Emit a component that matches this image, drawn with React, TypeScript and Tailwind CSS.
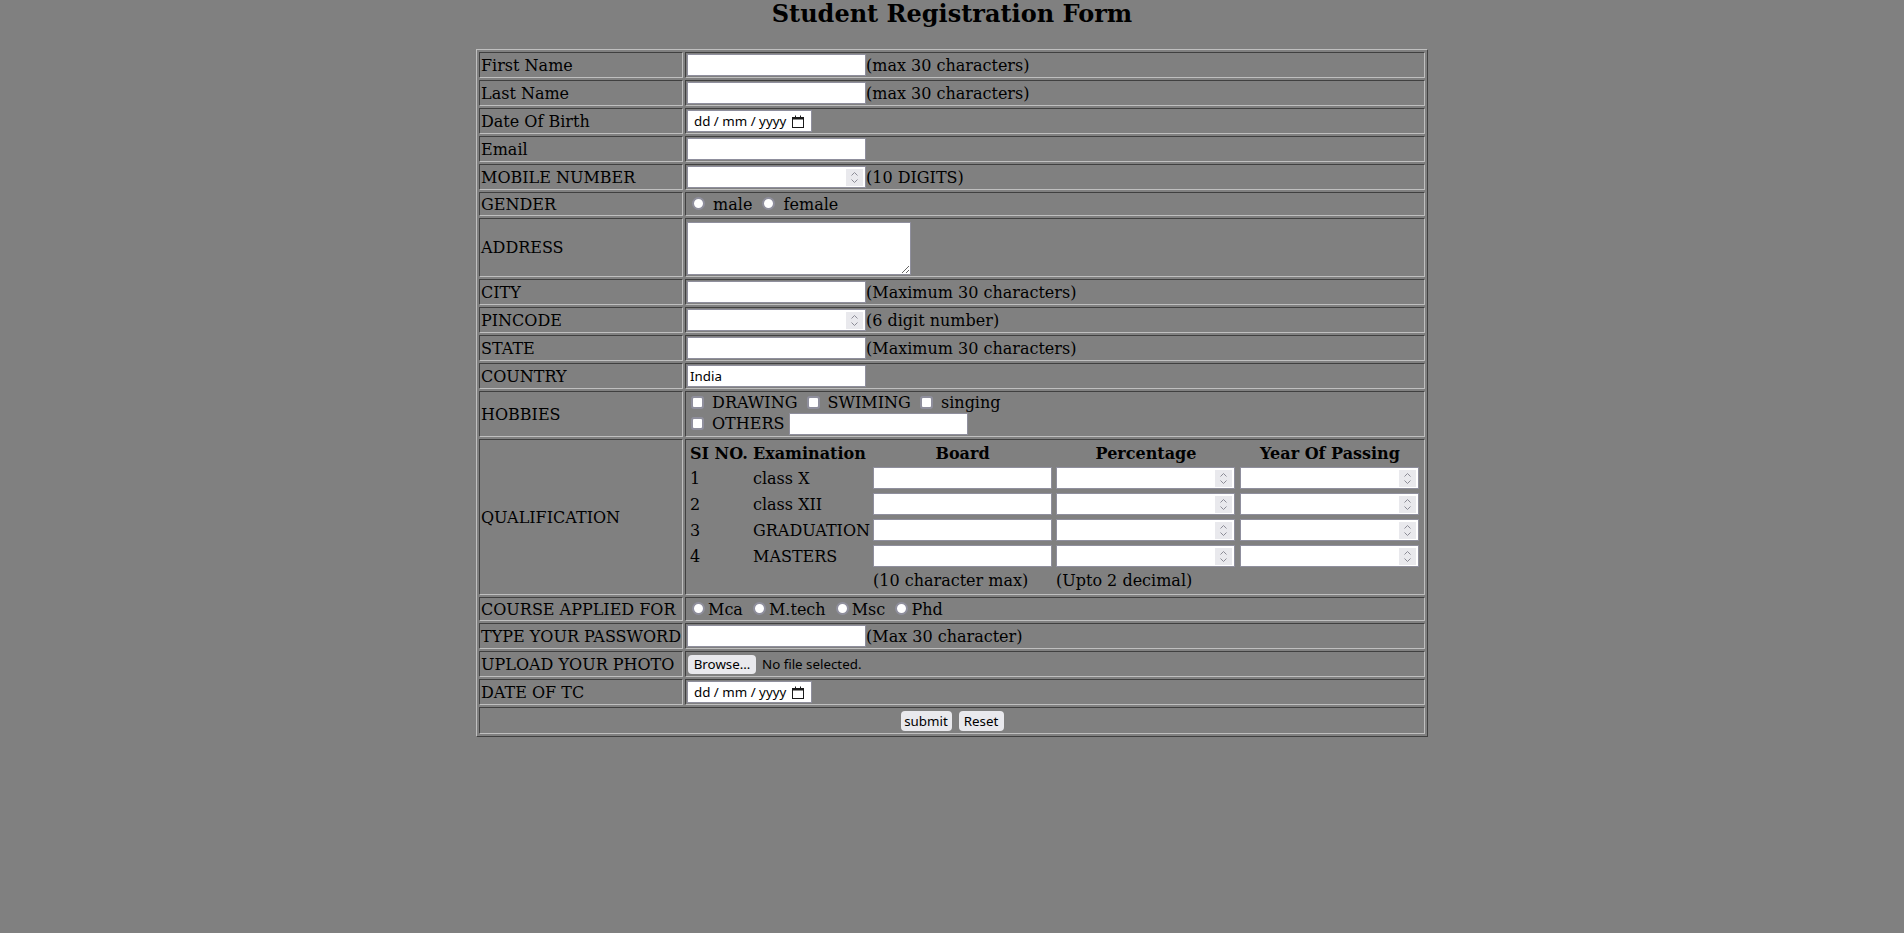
import React from "react";

const cell =
  "border border-t-[#404040] border-l-[#404040] border-b-[#bfbfbf] border-r-[#bfbfbf] p-[1px] align-middle";
const sans = "font-['Noto_Sans',sans-serif] text-[13.33px]";
const textBox =
  "h-[22px] w-[179px] border border-[#8f8f9d] bg-white px-[2px] outline-none text-black " + sans;

function TextInput({ type = "text", value }: { type?: string; value?: string }) {
  return <input type={type} defaultValue={value} className={textBox} />;
}

function Spinner() {
  return (
    <span className="mr-[2px] flex h-[17px] w-[17px] shrink-0 items-center justify-center bg-[#e9e9ed]">
      <svg width="9" height="13" viewBox="0 0 9 13" fill="none">
        <path d="M1.5 4.5 L4.5 1.5 L7.5 4.5" stroke="#8c8c96" strokeWidth="1" />
        <path d="M1.5 8.5 L4.5 11.5 L7.5 8.5" stroke="#8c8c96" strokeWidth="1" />
      </svg>
    </span>
  );
}

function NumberInput() {
  return (
    <span className="inline-flex h-[22px] w-[179px] items-center border border-[#8f8f9d] bg-white">
      <input type="text" inputMode="numeric" className={"h-full min-w-0 flex-1 bg-transparent px-[2px] outline-none " + sans} />
      <Spinner />
    </span>
  );
}

function DateBox() {
  return (
    <span className={"inline-flex h-[22px] w-[125px] items-center border border-[#8f8f9d] bg-white pl-[6px] text-black " + sans}>
      <span>dd / mm / yyyy</span>
      <svg className="ml-auto mr-[7px]" width="12" height="13" viewBox="0 0 12 13" fill="none">
        <rect x="0.5" y="2.5" width="11" height="10" stroke="#1a1a1a" strokeWidth="1" />
        <rect x="0.5" y="2.5" width="11" height="2" fill="#1a1a1a" />
        <path d="M3.5 0.5 V2.5 M8.5 0.5 V2.5" stroke="#1a1a1a" strokeWidth="1" />
      </svg>
    </span>
  );
}

const radioCls =
  "appearance-none w-[13px] h-[13px] rounded-full border-2 border-[#8f8f9d] bg-white ml-[5px] mr-[3px] mt-[3px] align-baseline";
const checkCls =
  "appearance-none w-[13px] h-[13px] rounded-[3px] border-2 border-[#8f8f9d] bg-white mt-[3px] mr-[3px] mb-[3px] ml-[4px] align-[-4px]";

function Label({ children }: { children: React.ReactNode }) {
  return <td className={cell + " w-[205px] whitespace-nowrap"}>{children}</td>;
}

function Row({ label, children }: { label: string; children: React.ReactNode }) {
  return (
    <tr>
      <Label>{label}</Label>
      <td className={cell}>
        <div className="flex h-[22px] items-center whitespace-nowrap">{children}</div>
      </td>
    </tr>
  );
}

const qcell = "p-[1px] align-middle";

export default function App() {
  const quals = [
    ["1", "class X"],
    ["2", "class XII"],
    ["3", "GRADUATION"],
    ["4", "MASTERS"],
  ];
  return (
    <div className="min-h-screen bg-[#808080] font-['DejaVu_Serif',serif] text-[16px] leading-[19px] text-black">
      <h2 className="pb-[21px] text-center text-[24px] font-bold leading-[28px]">Student Registration Form</h2>
      <table className="mx-auto w-1/2 border-separate border-spacing-[2px] border border-t-[#bfbfbf] border-l-[#bfbfbf] border-b-[#404040] border-r-[#404040]">
        <tbody>
          <Row label="First Name">
            <TextInput />
            <span>(max 30 characters)</span>
          </Row>
          <Row label="Last Name">
            <TextInput />
            <span>(max 30 characters)</span>
          </Row>
          <Row label="Date Of Birth">
            <DateBox />
          </Row>
          <Row label="Email">
            <TextInput type="email" />
          </Row>
          <Row label="MOBILE NUMBER">
            <NumberInput />
            <span>(10 DIGITS)</span>
          </Row>
          <tr>
            <Label>GENDER</Label>
            <td className={cell + " whitespace-nowrap"}>
              <input type="radio" name="gender" className={radioCls} /> male{" "}
              <input type="radio" name="gender" className={radioCls} /> female
            </td>
          </tr>
          <tr>
            <Label>ADDRESS</Label>
            <td className={cell}>
              <textarea className={"mt-[2px] block h-[53px] w-[224px] border border-[#8f8f9d] bg-white outline-none " + sans} />
            </td>
          </tr>
          <Row label="CITY">
            <TextInput />
            <span>(Maximum 30 characters)</span>
          </Row>
          <Row label="PINCODE">
            <NumberInput />
            <span>(6 digit number)</span>
          </Row>
          <Row label="STATE">
            <TextInput />
            <span>(Maximum 30 characters)</span>
          </Row>
          <Row label="COUNTRY">
            <TextInput value="India" />
          </Row>
          <tr>
            <Label>HOBBIES</Label>
            <td className={cell + " whitespace-nowrap"}>
              <div>
                <input type="checkbox" className={checkCls} /> DRAWING{" "}
                <input type="checkbox" className={checkCls} /> SWIMING{" "}
                <input type="checkbox" className={checkCls} /> singing
              </div>
              <div className="flex h-[23px] items-center">
                <input type="checkbox" className="ml-[4px] mr-[3px] h-[13px] w-[13px] appearance-none rounded-[3px] border-2 border-[#8f8f9d] bg-white" />
                <span className="ml-[5px]">OTHERS</span>
                <span className="ml-[5px]">
                  <input type="text" className={textBox + " w-[178px]"} />
                </span>
              </div>
            </td>
          </tr>
          <tr>
            <Label>QUALIFICATION</Label>
            <td className={cell}>
              <table className="w-full table-fixed border-separate border-spacing-[2px]">
                <thead>
                  <tr>
                    <th className={qcell + " w-[61px] text-left font-bold whitespace-nowrap"}>SI NO.</th>
                    <th className={qcell + " w-[118px] text-left font-bold whitespace-nowrap"}>Examination</th>
                    <th className={qcell + " w-[181px] text-center font-bold"}>Board</th>
                    <th className={qcell + " w-[182px] text-center font-bold"}>Percentage</th>
                    <th className={qcell + " w-[182px] text-center font-bold whitespace-nowrap"}>Year Of Passing</th>
                  </tr>
                </thead>
                <tbody>
                  {quals.map(([n, e]) => (
                    <tr key={n}>
                      <td className={qcell}>{n}</td>
                      <td className={qcell + " whitespace-nowrap"}>{e}</td>
                      <td className={qcell}>
                        <div className="flex h-[22px] items-center">
                          <TextInput />
                        </div>
                      </td>
                      <td className={qcell}>
                        <div className="flex h-[22px] items-center">
                          <NumberInput />
                        </div>
                      </td>
                      <td className={qcell}>
                        <div className="flex h-[22px] items-center">
                          <NumberInput />
                        </div>
                      </td>
                    </tr>
                  ))}
                  <tr>
                    <td className={qcell}></td>
                    <td className={qcell}></td>
                    <td className={qcell + " whitespace-nowrap"}>(10 character max)</td>
                    <td className={qcell + " whitespace-nowrap"}>(Upto 2 decimal)</td>
                    <td className={qcell}></td>
                  </tr>
                </tbody>
              </table>
            </td>
          </tr>
          <tr>
            <Label>COURSE APPLIED FOR</Label>
            <td className={cell + " whitespace-nowrap"}>
              <input type="radio" name="course" className={radioCls} />Mca{" "}
              <input type="radio" name="course" className={radioCls} />M.tech{" "}
              <input type="radio" name="course" className={radioCls} />Msc{" "}
              <input type="radio" name="course" className={radioCls} />Phd
            </td>
          </tr>
          <Row label="TYPE YOUR PASSWORD">
            <TextInput type="password" />
            <span>(Max 30 character)</span>
          </Row>
          <Row label="UPLOAD YOUR PHOTO">
            <button className={"ml-[1px] h-[19px] w-[68px] rounded-[4px] bg-[#e9e9ed] text-center leading-[19px] text-black " + sans}>
              Browse…
            </button>
            <span className={"ml-[6px] " + sans}>No file selected.</span>
          </Row>
          <Row label="DATE OF TC">
            <DateBox />
          </Row>
          <tr>
            <td colSpan={2} className={cell}>
              <div className="flex h-[23px] items-center justify-center gap-[7px]">
                <button className={"h-[20px] w-[51px] rounded-[4px] bg-[#e9e9ed] text-center leading-[20px] text-black " + sans}>
                  submit
                </button>
                <button className={"h-[20px] w-[45px] rounded-[4px] bg-[#e9e9ed] text-center leading-[20px] text-black " + sans}>
                  Reset
                </button>
              </div>
            </td>
          </tr>
        </tbody>
      </table>
    </div>
  );
}
